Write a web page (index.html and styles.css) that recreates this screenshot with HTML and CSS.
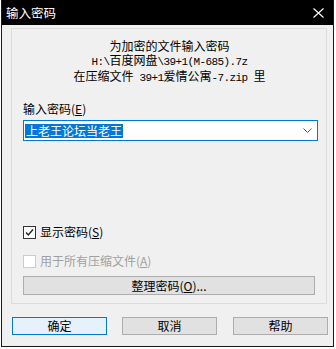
FILE: index.html
```html
<!DOCTYPE html>
<html lang="zh-CN">
<head>
    <meta charset="UTF-8">
    <title>输入密码</title>
    <link rel="stylesheet" href="styles.css">
</head>
<body>
    <div class="window">
        <div class="titlebar">
            <span class="title">输入密码</span>
            <svg class="close" width="11" height="10" viewBox="0 0 11 10">
                <path d="M0.5 0.5 L10.5 9.5 M10.5 0.5 L0.5 9.5" stroke="#fff" stroke-width="1.1" fill="none"/>
            </svg>
        </div>
        <div class="group">
            <div class="info">
                <div>为加密的文件输入密码</div>
                <div><span class="mono">H:\</span>百度网盘<span class="mono">\39+1(M-685).7z</span></div>
                <div>在压缩文件<span class="mono"> 39+1</span>爱情公寓<span class="mono">-7.zip </span>里</div>
            </div>
            <div class="label">输入密码(<u>E</u>)</div>
            <div class="combo">
                <span class="selected">上老王论坛当老王</span>
                <svg class="chevron" width="9" height="5" viewBox="0 0 9 5">
                    <path d="M0.5 0.5 L4.5 4.5 L8.5 0.5" stroke="#555" stroke-width="1" fill="none"/>
                </svg>
            </div>
            <div class="check-row show-pass">
                <span class="box checked">
                    <svg width="11" height="11" viewBox="0 0 11 11">
                        <path d="M2 5.5 L4.3 8 L9 2.5" stroke="#222" stroke-width="1.4" fill="none"/>
                    </svg>
                </span>
                <span>显示密码(<u>S</u>)</span>
            </div>
            <div class="check-row disabled">
                <span class="box"></span>
                <span>用于所有压缩文件(<u>A</u>)</span>
            </div>
            <button class="btn manage">整理密码(<u>O</u>)...</button>
        </div>
        <div class="actions">
            <button class="btn default">确定</button>
            <button class="btn">取消</button>
            <button class="btn">帮助</button>
        </div>
    </div>
</body>
</html>
```

FILE: styles.css
```css
body {
    margin: 0;
    background-color: #fff;
    font-family: "Noto Sans CJK SC", "Noto Sans", sans-serif;
    font-size: 12px;
    color: #000;
}
.window {
    margin-left: 1px;
    width: 331px;
    height: 346px;
    background-color: #f0f0f0;
    border: 1px solid #1a1a1a;
    border-top: none;
}
.titlebar {
    height: 25px;
    background-color: #000;
    color: #fff;
    display: flex;
    align-items: center;
    justify-content: space-between;
    padding: 0 9px 0 4px;
}
.title {
    font-size: 12.5px;
    line-height: 14px;
}
.group {
    margin: 3px 6px 0 9px;
    height: 274px;
    border: 1px solid #dcdcdc;
    padding: 0 10px 0 11px;
}
.info {
    margin-top: 10px;
    text-align: center;
    line-height: 14px;
}
.mono {
    font-family: "Liberation Mono", monospace;
    font-size: 11px;
    letter-spacing: -0.6px;
    white-space: pre;
}
.label {
    margin-top: 17px;
    line-height: 14px;
}
.combo {
    margin-top: 4px;
    height: 19px;
    width: 287px;
    background-color: #fff;
    border: 1px solid #0078d7;
    display: flex;
    align-items: center;
    justify-content: space-between;
    padding: 0 5px 0 1px;
}
.selected {
    background-color: #0078d7;
    color: #fff;
    line-height: 14px;
    padding: 0 1px;
}
.check-row {
    display: flex;
    align-items: center;
    gap: 4px;
    line-height: 14px;
}
.show-pass {
    margin-top: 84px;
}
.disabled {
    margin-top: 15px;
    color: #a0a0a0;
}
.box {
    width: 11px;
    height: 11px;
    border: 1px solid #cccccc;
    background-color: #fff;
    display: flex;
}
.box.checked {
    border-color: #333;
}
.btn {
    font-family: "Noto Sans CJK SC", "Noto Sans", sans-serif;
    font-size: 12px;
    background-color: #e1e1e1;
    border: 1px solid #adadad;
    padding: 0;
    color: #000;
    line-height: 14px;
}
.manage {
    display: block;
    width: 292px;
    height: 19px;
    margin-top: 8px;
}
.actions {
    display: flex;
    margin: 13px 0 0 10px;
    gap: 15px;
}
.actions .btn {
    width: 95px;
    height: 18px;
}
.actions .btn:last-child {
    margin-left: 1px;
}
.default {
    background-color: #e5f1fb;
    border-color: #0078d7;
}
```
